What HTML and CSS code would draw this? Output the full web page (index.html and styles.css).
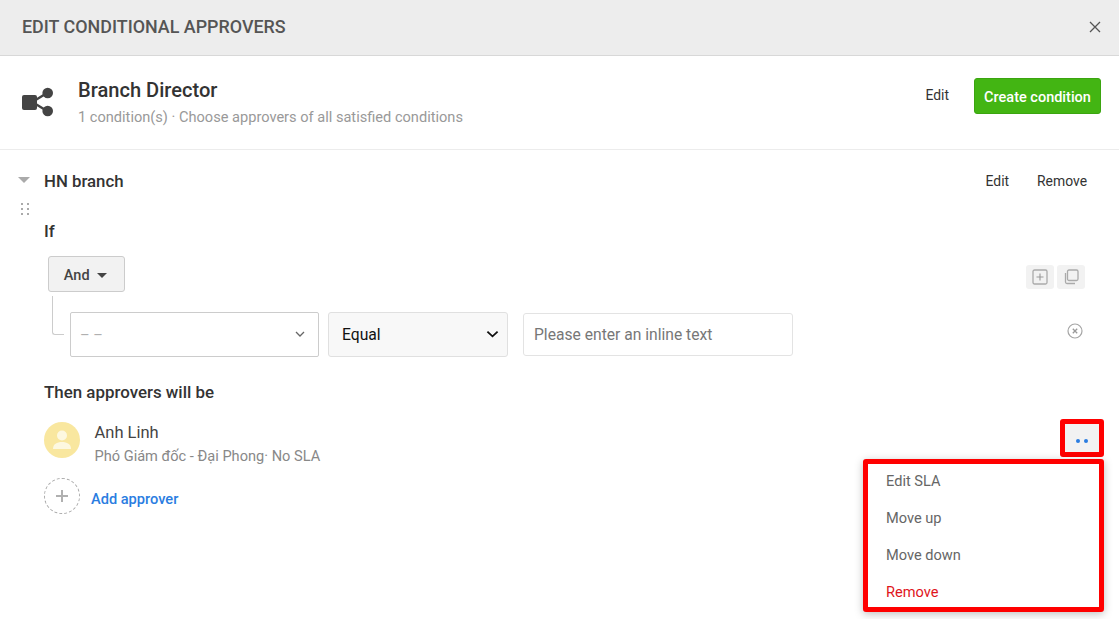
FILE: index.html
```html
<!DOCTYPE html>
<html lang="en">
<head>
<meta charset="utf-8">
<title>Edit conditional approvers</title>
<link rel="stylesheet" href="styles.css">
</head>
<body>
<div class="modal">
  <header class="modal-head">
    <h1 class="modal-title">EDIT CONDITIONAL APPROVERS</h1>
    <svg class="close-icon" viewBox="0 0 12 12" width="12" height="12"><path d="M1 1l10 10M11 1L1 11" stroke="#555" stroke-width="1.3" fill="none"/></svg>
  </header>

  <section class="branch">
    <svg class="branch-icon" viewBox="0 0 32 32" width="32" height="32"><path d="M12 15L25 7M12 17l13 8" stroke="#444" stroke-width="2.4" fill="none"/><rect x="0" y="9" width="15" height="15" rx="2" fill="#444"/><circle cx="25.7" cy="7" r="5.3" fill="#444"/><circle cx="25.7" cy="25" r="5.3" fill="#444"/></svg>
    <div class="branch-text">
      <div class="branch-name">Branch Director</div>
      <div class="branch-sub">1 condition(s) · Choose approvers of all satisfied conditions</div>
    </div>
    <a class="link-action branch-edit">Edit</a>
    <button class="btn-create">Create condition</button>
  </section>

  <section class="condition">
    <div class="cond-head">
      <div class="cond-handle">
        <span class="caret-gray"></span>
        <svg class="drag" viewBox="0 0 8 12" width="8" height="12"><g fill="#aaa"><rect x="0" y="0" width="2" height="2"/><rect x="6" y="0" width="2" height="2"/><rect x="0" y="5" width="2" height="2"/><rect x="6" y="5" width="2" height="2"/><rect x="0" y="10" width="2" height="2"/><rect x="6" y="10" width="2" height="2"/></g></svg>
      </div>
      <div class="cond-name">HN branch</div>
      <a class="link-action">Edit</a>
      <a class="link-action">Remove</a>
    </div>

    <div class="cond-body">
      <h2 class="label label-if">If</h2>
      <div class="group-row">
        <button class="btn-and">And <span class="caret-dark"></span></button>
        <div class="tool-icons">
          <span class="tool"><svg viewBox="0 0 16 16" width="16" height="16"><rect x="1" y="1" width="14" height="14" rx="1.5" fill="none" stroke="#aaa" stroke-width="1.3"/><path d="M8 4.5v7M4.5 8h7" stroke="#999" stroke-width="1.1"/></svg></span>
          <span class="tool"><svg viewBox="0 0 16 16" width="16" height="16"><rect x="4.5" y="1" width="10.5" height="10.5" rx="1.5" fill="none" stroke="#aaa" stroke-width="1.3"/><path d="M2.5 4v9a1.5 1.5 0 0 0 1.5 1.5h8" fill="none" stroke="#aaa" stroke-width="1.3"/></svg></span>
        </div>
      </div>
      <div class="rule-row">
        <span class="connector"></span>
        <div class="fake-select"><span>– –</span><svg viewBox="0 0 10 6" width="10" height="6"><path d="M1 1l4 4 4-4" fill="none" stroke="#666" stroke-width="1.3"/></svg></div>
        <select class="op-select"><option>Equal</option></select>
        <input class="text-input" type="text" placeholder="Please enter an inline text">
        <svg class="rule-remove" viewBox="0 0 16 16" width="16" height="16"><circle cx="8" cy="8" r="7" fill="none" stroke="#a5a5a5" stroke-width="1.2"/><path d="M5.8 5.8l4.4 4.4M10.2 5.8l-4.4 4.4" stroke="#999" stroke-width="1.3"/></svg>
      </div>

      <h2 class="label label-then">Then approvers will be</h2>
      <div class="approver">
        <span class="avatar"><svg viewBox="0 0 36 36" width="36" height="36"><circle cx="18" cy="13.5" r="5" fill="#fdf8e0"/><path d="M9 27c0-5 4-7 9-7s9 2 9 7z" fill="#fdf8e0"/></svg></span>
        <div class="approver-text">
          <div class="approver-name">Anh Linh</div>
          <div class="approver-sub">Phó Giám đốc - Đại Phong· No SLA</div>
        </div>
        <button class="more-btn"><span></span><span></span></button>
        <ul class="menu">
          <li>Edit SLA</li>
          <li>Move up</li>
          <li>Move down</li>
          <li class="danger">Remove</li>
        </ul>
      </div>
      <div class="add-row">
        <span class="add-circle"><svg viewBox="0 0 12 12" width="12" height="12"><path d="M6 0v12M0 6h12" stroke="#b0b0b0" stroke-width="2"/></svg></span>
        <a class="add-link">Add approver</a>
      </div>
    </div>
  </section>
</div>
</body>
</html>
```
FILE: styles.css
```css
* { box-sizing: border-box; }
html, body { margin: 0; height: 100%; }
body { font-family: Roboto, "Noto Sans", sans-serif; background: #fff; color: #333; overflow: hidden; }
.modal { width: 1119px; height: 619px; }

.modal-head { height: 56px; background: #ededed; border-bottom: 1px solid #d8d8d8; display: flex; align-items: center; justify-content: space-between; padding: 0 18px 2px 22px; }
.modal-title { margin: 0; font-size: 17.9px; font-weight: 500; color: #555; }
.close-icon { display: block; }

.branch { height: 94px; border-bottom: 1px solid #ececec; display: flex; align-items: center; padding: 0 18px 0 22px; }
.branch-icon { margin-top: -1px; flex: none; }
.branch-text { flex: 1; margin-left: 24px; }
.branch-name { font-size: 20.1px; font-weight: 500; color: #333; line-height: 24px; }
.branch-sub { font-size: 14.6px; color: #999; line-height: 20px; margin-top: 5px; }
.link-action { font-size: 13.9px; font-weight: 400; color: #333; }
.branch-edit { margin-right: 25px; margin-top: -16px; }
.btn-create { width: 127px; height: 36px; margin-top: -13px; background: #43b513; border: 1px solid #3ba510; border-radius: 3px; color: #fff; font: 500 14.5px Roboto, sans-serif; padding: 2px 0 0; }

.condition { padding: 0 32px 0 18px; }
.cond-head { display: flex; align-items: flex-start; padding-top: 21px; height: 71px; position: relative; }
.cond-handle { width: 26px; flex: none; }
.caret-gray { display: block; width: 0; height: 0; margin-top: 6px; border-left: 6px solid transparent; border-right: 6px solid transparent; border-top: 6px solid #aaa; }
.drag { display: block; margin: 20px 0 0 3px; }
.cond-name { flex: 1; font-size: 16.8px; font-weight: 500; color: #333; line-height: 20px; }
.cond-head .link-action { line-height: 20px; }
.cond-head .link-action + .link-action { margin-left: 28px; }

.cond-body { padding-left: 26px; }
.label { margin: 0; font-size: 16.9px; font-weight: 500; color: #333; line-height: 20px; }

.group-row { display: flex; justify-content: space-between; margin-top: 15px; margin-left: 4px; height: 36px; margin-right: -30px; padding-right: 32px; }
.btn-and { width: 77px; height: 36px; background: #f2f2f2; border: 1px solid #ccc; border-radius: 3px; font: 500 14.5px Roboto, sans-serif; color: #444; padding: 2px 2px 0 0; }
.caret-dark { display: inline-block; width: 0; height: 0; margin: 0 0 2px 4px; border-left: 5px solid transparent; border-right: 5px solid transparent; border-top: 5px solid #444; }
.tool-icons { display: flex; gap: 3px; margin-top: 9px; height: 24px; }
.tool { width: 28px; height: 24px; background: #f2f2f2; border-radius: 3px; display: flex; align-items: center; justify-content: center; }

.rule-row { display: flex; align-items: center; height: 45px; margin-top: 20px; position: relative; margin-left: 26px; }
.connector { position: absolute; left: -18px; top: -16px; width: 12px; height: 39px; border-left: 1px solid #ccc; border-bottom: 1px solid #ccc; border-bottom-left-radius: 3px; }
.fake-select { width: 249px; height: 45px; border: 1px solid #ccc; border-radius: 2px; display: flex; align-items: center; justify-content: space-between; padding: 0 13px 0 9px; font-size: 14.6px; color: #b0b0b0; flex: none; }
.fake-select svg { margin-top: -2px; }
.op-select { appearance: none; -webkit-appearance: none; width: 180px; height: 45px; margin-left: 9px; border: 1px solid #e0e0e0; border-radius: 3px; background-color: #f8f8f8; background-image: url("data:image/svg+xml,%3Csvg xmlns='http://www.w3.org/2000/svg' viewBox='0 0 14 8'%3E%3Cpath d='M1.5 1.5L7 6.5l5.5-5' fill='none' stroke='%23111' stroke-width='2'/%3E%3C/svg%3E"); background-repeat: no-repeat; background-size: 13px 8px; background-position: 157px 17px; font: 15.7px Roboto, sans-serif; color: #111; padding: 0 10px 0 13px; flex: none; }
.text-input { width: 270px; height: 43px; margin-left: 15px; border: 1px solid #e3e3e3; border-radius: 3px; font: 15.65px Roboto, sans-serif; padding: 0 10px; flex: none; outline: none; }
.text-input::placeholder { color: #777; opacity: 1; }
.rule-remove { position: absolute; left: 997px; top: 11px; }

.label-then { margin-top: 25px; }
.approver { display: flex; position: relative; margin-top: 20px; height: 36px; }
.avatar { width: 36px; height: 36px; border-radius: 50%; background: #f9e79f; flex: none; display: block; }
.avatar svg { display: block; }
.approver-text { margin-left: 14.5px; margin-top: 1px; }
.approver-name { font-size: 16.5px; line-height: 20px; color: #444; }
.approver-sub { font-size: 14.6px; line-height: 18px; color: #888; margin-top: 4px; }
.more-btn { position: absolute; left: 1016px; top: -3px; width: 44px; height: 38px; border: 5px solid #f00; border-radius: 3px; background: #f2f2f2; display: flex; align-items: center; justify-content: center; gap: 4px; padding: 0; }
.more-btn span { width: 4px; height: 4px; border-radius: 50%; background: #2a7de1; margin-top: 5px; }
.menu { position: absolute; left: 819px; top: 37px; width: 241px; height: 153px; margin: 0; padding: 0; list-style: none; background: #fff; border: 5px solid #f00; border-radius: 3px; box-shadow: 0 2px 8px rgba(0,0,0,.25); z-index: 2; font-size: 14.6px; color: #666; }
.menu li { height: 37px; line-height: 35px; padding-left: 18px; }
.menu li.danger { color: #e0141c; }

.add-row { display: flex; align-items: center; margin-top: 20px; }
.add-circle { width: 36px; height: 36px; border: 1px dashed #aaa; border-radius: 50%; display: flex; align-items: center; justify-content: center; flex: none; }
.add-link { margin-left: 11px; margin-top: 5px; font-size: 14.6px; font-weight: 500; color: #2a7de1; }
```
